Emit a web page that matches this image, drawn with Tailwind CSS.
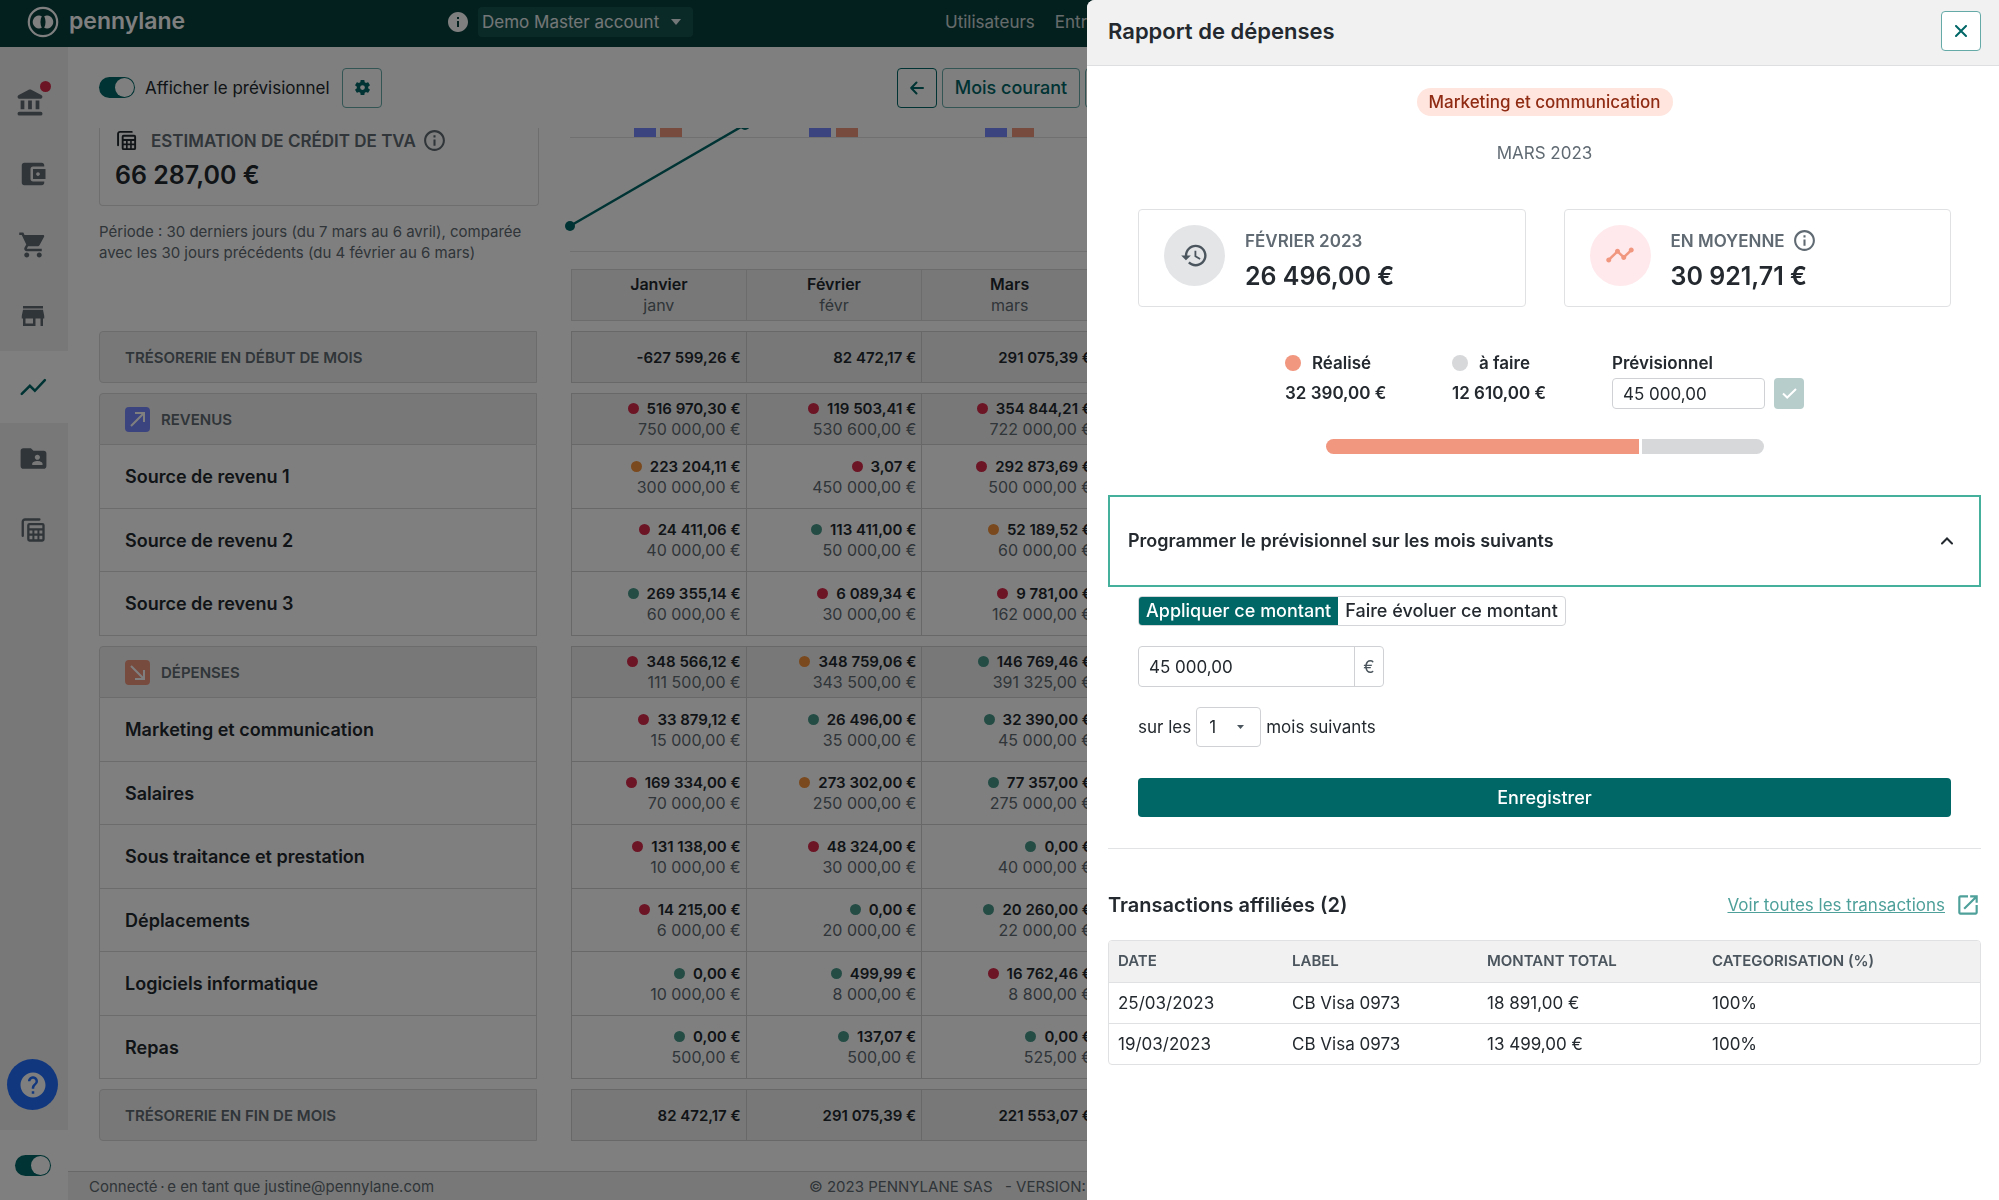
<!DOCTYPE html>
<html lang="fr">
<head>
<meta charset="utf-8">
<meta name="viewport" content="width=device-width, initial-scale=1">
<title>Pennylane – Rapport de dépenses</title>
<script src="https://cdn.jsdelivr.net/npm/@tailwindcss/browser@4"></script>
</head>
<body class="h-screen overflow-hidden bg-white font-['Inter',sans-serif] text-[17px] leading-6 text-[#23292e]">

<svg class="hidden">
  <symbol id="i-bank" viewBox="0 0 24 24"><path d="M10.6 1.6 3 5.6c-1.6.9-1 3 .6 3h16.8c1.6 0 2.2-2.1.6-3l-7.600-4c-.9-.5-1.900-.5-2.800 0zM4.500 10h3v7h-3zM10.500 10h3v7h-3zM16.500 10h3v7h-3zM3.500 19h17a1.500 1.500 0 0 1 0 3h-17a1.500 1.500 0 0 1 0-3z"/></symbol>
  <symbol id="i-wallet" viewBox="0 0 24 24"><path d="M21 18v1c0 1.1-.9 2-2 2H5c-1.110 0-2-.9-2-2V5c0-1.100.89-2 2-2h14c1.100 0 2 .9 2 2v1h-9c-1.110 0-2 .9-2 2v8c0 1.100.89 2 2 2h9zm-9-2h10V8H12v8zm4-2.500c-.83 0-1.500-.67-1.500-1.500s.67-1.500 1.500-1.500 1.500.67 1.500 1.500-.67 1.500-1.500 1.500z"/></symbol>
  <symbol id="i-cart" viewBox="0 0 24 24"><path d="M7 18c-1.100 0-1.990.9-1.990 2S5.900 22 7 22s2-.9 2-2-.9-2-2-2zM1 2v2h2l3.600 7.590-1.350 2.450c-.16.28-.25.61-.25.96 0 1.100.9 2 2 2h12v-2H7.420c-.14 0-.25-.11-.25-.25l.03-.12.9-1.630h7.450c.75 0 1.410-.41 1.750-1.030l3.580-6.490c.08-.14.12-.31.12-.48 0-.55-.45-1-1-1H5.210l-.94-2H1zm16 16c-1.100 0-1.990.9-1.990 2s.89 2 1.990 2 2-.9 2-2-.9-2-2-2z"/></symbol>
  <symbol id="i-store" viewBox="0 0 24 24"><path d="M20 4H4v2h16V4zm1 10v-2l-1-5H4l-1 5v2h1v6h10v-6h4v6h2v-6h1zm-9 4H6v-4h6v4z"/></symbol>
  <symbol id="i-chart" viewBox="0 0 24 24"><path d="M3 17.500 9.500 11l4 4L21.500 6.500" fill="none" stroke="currentColor" stroke-width="2" stroke-linecap="round"/></symbol>
  <symbol id="i-folder" viewBox="0 0 24 24"><path d="M20 6h-8l-2-2H4c-1.100 0-1.990.9-1.990 2L2 18c0 1.100.9 2 2 2h16c1.100 0 2-.9 2-2V8c0-1.100-.9-2-2-2zm-5 3c1.100 0 2 .9 2 2s-.9 2-2 2-2-.9-2-2 .9-2 2-2zm4 8h-8v-1c0-1.330 2.670-2 4-2s4 .67 4 2v1z"/></symbol>
  <symbol id="i-calc" viewBox="0 0 24 24"><path d="M3.200 17V5a2 2 0 0 1 2-2H17.500" fill="none" stroke="currentColor" stroke-width="2" stroke-linecap="round"/><path fill-rule="evenodd" d="M9 6h11a2 2 0 0 1 2 2v12a2 2 0 0 1-2 2H9a2 2 0 0 1-2-2V8a2 2 0 0 1 2-2zm0 2v2.500h11V8zM9 12.500V15h2.500v-2.500zM13.200 12.500V15h2.600v-2.500zM17.500 12.500V15H20v-2.500zM9 17v3h2.500v-3zM13.200 17v3h2.600v-3zM17.500 17v3H20v-3z"/></symbol>
  <symbol id="i-gear" viewBox="0 0 24 24"><path d="M19.140 12.940c.04-.3.06-.61.06-.94 0-.32-.02-.64-.07-.94l2.030-1.580c.18-.14.23-.41.12-.61l-1.920-3.320c-.12-.22-.37-.29-.59-.22l-2.390.96c-.5-.38-1.030-.7-1.620-.94l-.36-2.540c-.04-.24-.24-.41-.48-.41h-3.840c-.24 0-.43.17-.47.41l-.36 2.540c-.59.24-1.130.57-1.620.94l-2.390-.96c-.22-.08-.47 0-.59.22L2.740 8.870c-.12.21-.08.47.12.61l2.030 1.580c-.05.3-.09.63-.09.94s.02.64.07.94l-2.030 1.580c-.18.14-.23.41-.12.61l1.920 3.320c.12.22.37.29.59.22l2.390-.96c.5.38 1.030.7 1.620.94l.36 2.540c.05.24.24.41.48.41h3.840c.24 0 .44-.17.47-.41l.36-2.540c.59-.24 1.130-.56 1.620-.94l2.390.96c.22.08.47 0 .59-.22l1.920-3.320c.12-.22.07-.47-.12-.61l-2.010-1.580zM12 15a3 3 0 1 1 0-6 3 3 0 0 1 0 6z"/></symbol>
  <symbol id="i-info" viewBox="0 0 24 24"><path d="M11 7h2v2h-2zm0 4h2v6h-2zm1-9C6.480 2 2 6.480 2 12s4.480 10 10 10 10-4.480 10-10S17.520 2 12 2zm0 18c-4.410 0-8-3.590-8-8s3.590-8 8-8 8 3.590 8 8-3.590 8-8 8z"/></symbol>
  <symbol id="i-info-solid" viewBox="0 0 24 24"><path d="M12 2C6.480 2 2 6.480 2 12s4.480 10 10 10 10-4.480 10-10S17.520 2 12 2zm1 15h-2v-6h2v6zm0-8h-2V7h2v2z"/></symbol>
  <symbol id="i-help" viewBox="0 0 24 24"><path d="M12 2C6.480 2 2 6.480 2 12s4.480 10 10 10 10-4.480 10-10S17.520 2 12 2zm1 17h-2v-2h2v2zm2.070-7.750l-.9.92C13.450 12.900 13 13.500 13 15h-2v-.5c0-1.100.45-2.100 1.170-2.830l1.240-1.260c.37-.36.59-.86.59-1.410 0-1.100-.9-2-2-2s-2 .9-2 2H8c0-2.210 1.790-4 4-4s4 1.790 4 4c0 .88-.36 1.680-.93 2.250z"/></symbol>
  <symbol id="i-history" viewBox="0 0 24 24"><path d="M13 3c-4.970 0-9 4.030-9 9H1l3.890 3.890.07.14L9 12H6c0-3.870 3.130-7 7-7s7 3.130 7 7-3.130 7-7 7c-1.930 0-3.680-.79-4.940-2.060l-1.420 1.420C8.270 19.990 10.510 21 13 21c4.970 0 9-4.030 9-9s-4.030-9-9-9zm-1 5v5l4.280 2.540.72-1.210-3.500-2.080V8H12z"/></symbol>
  <symbol id="i-timeline" viewBox="0 0 24 24"><path d="M23 8c0 1.100-.9 2-2 2-.18 0-.35-.02-.51-.07l-3.560 3.550c.05.16.07.34.07.52 0 1.100-.9 2-2 2s-2-.9-2-2c0-.18.02-.36.07-.52l-2.550-2.550c-.16.05-.34.07-.52.07s-.36-.02-.52-.07l-4.550 4.560c.05.16.07.33.07.51 0 1.100-.9 2-2 2s-2-.9-2-2 .9-2 2-2c.18 0 .35.02.51.07l4.560-4.550C8.020 9.360 8 9.180 8 9c0-1.100.9-2 2-2s2 .9 2 2c0 .18-.02.36-.07.52l2.550 2.550c.16-.05.34-.07.52-.07s.36.02.52.07l3.550-3.560C19.020 8.350 19 8.180 19 8c0-1.100.9-2 2-2s2 .9 2 2z"/></symbol>
  <symbol id="i-open" viewBox="0 0 24 24"><path d="M19 19H5V5h7V3H5c-1.110 0-2 .9-2 2v14c0 1.100.89 2 2 2h14c1.100 0 2-.9 2-2v-7h-2v7zM14 3v2h3.590l-9.830 9.830 1.410 1.410L19 6.410V10h2V3h-7z"/></symbol>
</svg>

<div class="flex h-full flex-col">
  <header class="flex h-[47px] shrink-0 items-center bg-[#063e3c] pb-1 text-white">
    <a href="#" class="flex w-[446px] items-center gap-[10px] pl-[27px]">
      <svg class="size-8" viewBox="0 0 32 32" fill="none"><circle cx="16" cy="16" r="14.200" stroke="currentColor" stroke-width="2.200"/><path d="M14.800 10.200a6.400 6.400 0 1 0 0 11.600c-1.800-3.500-1.800-8.100 0-11.600zM17.200 10.200a6.400 6.400 0 1 1 0 11.600c1.800-3.500 1.800-8.100 0-11.600z" fill="currentColor"/></svg>
      <span class="pb-[2px] text-[23px] font-semibold">pennylane</span>
    </a>
    <svg class="size-6 shrink-0" fill="currentColor"><use href="#i-info-solid"/></svg>
    <button class="ml-2 flex h-[30px] w-[215px] shrink-0 items-center justify-between rounded bg-[#155450] pr-3 pl-1 text-white/90">
      Demo Master account
      <svg class="h-[6px] w-[10px]" viewBox="0 0 10 6" fill="currentColor"><path d="M0 0h10L5 6z"/></svg>
    </button>
    <nav class="ml-[252px] flex gap-5 text-white/80">
      <a href="#">Utilisateurs</a>
      <a href="#">Entreprises</a>
    </nav>
  </header>

  <div class="flex min-h-0 flex-1">
    <aside class="flex w-[68px] shrink-0 flex-col text-[#606a72]">
      <nav class="flex flex-1 flex-col bg-[#f1f1f1] pt-5">
        <a href="#" aria-label="Banque" class="relative flex h-[71px] items-center justify-center pr-2">
          <svg class="size-[30px]" fill="currentColor"><use href="#i-bank"/></svg>
          <span class="absolute top-[14px] right-[17px] size-[11px] rounded-full bg-[#d92b4b]"></span>
        </a>
        <a href="#" aria-label="Portefeuille" class="flex h-[71px] items-center justify-center pr-[2px]"><svg class="size-[30px]" fill="currentColor"><use href="#i-wallet"/></svg></a>
        <a href="#" aria-label="Achats" class="flex h-[71px] items-center justify-center pr-[2px]"><svg class="size-[30px]" fill="currentColor"><use href="#i-cart"/></svg></a>
        <a href="#" aria-label="Ventes" class="flex h-[71px] items-center justify-center pr-[2px]"><svg class="size-[30px]" fill="currentColor"><use href="#i-store"/></svg></a>
        <a href="#" aria-label="Pilotage" class="flex h-[72px] items-center justify-center bg-white pr-[2px] text-[#006666]"><svg class="size-[30px]" fill="currentColor"><use href="#i-chart"/></svg></a>
        <a href="#" aria-label="Dossier partagé" class="flex h-[71px] items-center justify-center pr-[2px]"><svg class="size-[31px]" fill="currentColor"><use href="#i-folder"/></svg></a>
        <a href="#" aria-label="Comptabilité" class="flex h-[71px] items-center justify-center pr-[2px]"><svg class="size-7" fill="currentColor"><use href="#i-calc"/></svg></a>
        <button aria-label="Aide" class="mt-auto mb-5 ml-[7px] flex size-[51px] items-center justify-center rounded-full bg-[#2270ff] text-white"><svg class="size-[30px]" fill="currentColor"><use href="#i-help"/></svg></button>
      </nav>
      <div class="flex h-[70px] items-center justify-center bg-white pr-[2px]">
        <input type="checkbox" checked aria-label="Mode comptable" class="flex h-[21px] w-9 appearance-none justify-end rounded-full bg-[#006666] p-px before:block before:size-[19px] before:rounded-full before:bg-white before:content-['']">
      </div>
    </aside>

    <div class="flex min-w-0 flex-1 flex-col">
      <div class="flex h-[81px] shrink-0 items-center pl-[31px]">
        <label class="flex w-[243px] items-center gap-[10px] whitespace-nowrap">
          <input type="checkbox" checked class="flex h-[21px] w-9 shrink-0 appearance-none justify-end rounded-full bg-[#006666] p-px before:block before:size-[19px] before:rounded-full before:bg-white before:content-['']">
          <span>Afficher le prévisionnel</span>
        </label>
        <button aria-label="Réglages" class="flex size-10 items-center justify-center rounded border border-[#66aaa8] text-[#006666]"><svg class="size-[19px]" fill="currentColor"><use href="#i-gear"/></svg></button>
        <div class="ml-[515px] flex gap-[5px] text-[18px] font-medium text-[#006666]">
          <button aria-label="Mois précédent" class="flex size-10 items-center justify-center rounded border border-[#006666]"><svg class="size-[14px]" viewBox="0 0 14 14" fill="none" stroke="currentColor" stroke-width="2" stroke-linecap="round" stroke-linejoin="round"><path d="M13 7H1.500M6.500 1.500 1.200 7l5.300 5.500"/></svg></button>
          <button class="h-10 w-[138px] rounded border border-[#66aaa8] whitespace-nowrap">Mois courant</button>
          <button aria-label="Mois suivant" class="size-10 rounded border border-[#66aaa8]"></button>
        </div>
      </div>

      <main class="min-h-0 flex-1 overflow-hidden pl-[31px]">
        <div class="flex h-[141px]">
          <section class="w-[440px] shrink-0">
            <div class="h-[78px] rounded-b border-x border-b border-[#dcdcdc] pl-[15px]">
              <h2 class="flex items-center font-semibold text-[#606a72]">
                <svg class="mr-[13px] size-[23px] text-[#23292e]" fill="currentColor"><use href="#i-calc"/></svg>
                <span class="whitespace-nowrap">ESTIMATION DE CRÉDIT DE TVA</span>
                <svg class="ml-[6px] size-[25px]" fill="currentColor"><use href="#i-info"/></svg>
              </h2>
              <p class="mt-[6px] text-[25px] leading-8 font-semibold">66 287,00 €</p>
            </div>
            <p class="mt-[15px] text-[15px] leading-[21px] text-[#606a72]">Période : 30 derniers jours (du 7 mars au 6 avril), comparée<br>avec les 30 jours précédents (du 4 février au 6 mars)</p>
          </section>
          <svg class="ml-[26px] h-[126px] w-[540px]" viewBox="0 0 540 126" fill="none">
            <path d="M5 9.500H540M5 123.500H540" stroke="#e0e0e0"/>
            <path d="M69 0h22v9H69zM244 0h22v9h-22zM420 0h22v9h-22z" fill="#7888ff"/>
            <path d="M95 0h22v9H95zM271 0h22v9h-22zM447 0h22v9h-22z" fill="#f1967f"/>
            <path d="M5 98 176-1" stroke="#006666" stroke-width="2.500"/>
            <circle cx="5" cy="98" r="5" fill="#006666"/><circle cx="180" cy="-3" r="5" fill="#006666"/>
          </svg>
        </div>

        <table class="w-[999px] table-fixed border-separate border-spacing-0 text-[16px] leading-[21px]">
          <colgroup><col class="w-[438px]"><col class="w-[34px]"><col><col><col></colgroup>
          <thead>
            <tr class="h-[52px]">
              <td></td><td></td>
              <th class="border border-[#d8d8d8] bg-[#f1f1f1] p-0"><span class="block font-semibold">Janvier</span><span class="block font-normal text-[#606a72]">janv</span></th>
              <th class="border-y border-r border-[#d8d8d8] bg-[#f1f1f1] p-0"><span class="block font-semibold">Février</span><span class="block font-normal text-[#606a72]">févr</span></th>
              <th class="border-y border-r border-[#d8d8d8] bg-[#f1f1f1] p-0"><span class="block font-semibold">Mars</span><span class="block font-normal text-[#606a72]">mars</span></th>
            </tr>
          </thead>
        </table>
      </main>

      <footer class="flex h-[29px] shrink-0 items-center border-t border-[#d0d0d0] bg-[#f1f1f1] pl-[21px] text-[15px] whitespace-nowrap text-[#606a72]">
        <span class="w-[720px] pt-px">Connecté&#8201;·&#8201;e en tant que justine@pennylane.com</span>
        <span class="w-[196px] pt-px">© 2023 PENNYLANE SAS</span>
        <span class="pt-px">- VERSION: 1.0</span>
      </footer>
    </div>
  </div>
</div>

<div class="fixed inset-0 bg-black/50"></div>

<div role="dialog" aria-label="Rapport de dépenses" class="fixed inset-y-0 right-0 flex w-[912px] max-w-full flex-col overflow-y-auto rounded-tl-lg bg-white">
  <header class="flex h-[66px] shrink-0 items-center justify-between border-b border-[#dedfe0] bg-[#f1f1f1] pr-[18px] pb-1 pl-[21px]">
    <h1 class="text-[22px] font-semibold">Rapport de dépenses</h1>
    <button aria-label="Fermer" class="flex size-10 items-center justify-center rounded border border-[#66aaa8] bg-white text-[#006666]"><svg class="size-3" viewBox="0 0 12 12" stroke="currentColor" stroke-width="2" stroke-linecap="round"><path d="M1 1l10 10M11 1 1 11"/></svg></button>
  </header>

  <div class="flex flex-col pr-[18px] pl-[21px]">
    <span class="mt-[22px] self-center rounded-full bg-[#ffe5de] px-3 py-[2px] font-medium text-[#8f2b13]">Marketing et communication</span>
    <p class="mt-[25px] text-center text-[#606a72]">MARS 2023</p>

    <div class="mt-11 grid grid-cols-2 gap-[38px] px-[30px]">
      <section class="flex h-[98px] items-center gap-[20px] rounded border border-[#e0e1e3] pl-[25px]">
        <span class="mb-[6px] flex size-[61px] items-center justify-center rounded-full bg-[#e3e5e7] text-[#4b555d]"><svg class="size-[29px]" fill="currentColor"><use href="#i-history"/></svg></span>
        <div class="pt-1">
          <h2 class="font-semibold text-[#606a72]">FÉVRIER 2023</h2>
          <p class="mt-[7px] text-[25px] leading-8 font-semibold">26 496,00 €</p>
        </div>
      </section>
      <section class="flex h-[98px] items-center gap-[20px] rounded border border-[#e0e1e3] pl-[25px]">
        <span class="mb-[6px] flex size-[61px] items-center justify-center rounded-full bg-[#ffe9ec] text-[#f1967f]"><svg class="size-[30px]" fill="currentColor"><use href="#i-timeline"/></svg></span>
        <div class="pt-1">
          <h2 class="flex h-6 items-center gap-[7px] font-semibold text-[#606a72]">EN MOYENNE <svg class="size-[25px]" fill="currentColor"><use href="#i-info"/></svg></h2>
          <p class="mt-[7px] text-[25px] leading-8 font-semibold">30 921,71 €</p>
        </div>
      </section>
    </div>

    <div class="mt-11 flex justify-center font-semibold">
      <div class="w-[167px]">
        <p class="flex items-center gap-[11px]"><span class="size-4 rounded-full bg-[#f1967f]"></span>Réalisé</p>
        <p class="mt-[6px]">32 390,00 €</p>
      </div>
      <div class="w-[160px]">
        <p class="flex items-center gap-[11px]"><span class="size-4 rounded-full bg-[#d7d8da]"></span>à faire</p>
        <p class="mt-[6px]">12 610,00 €</p>
      </div>
      <div>
        <label for="forecast" class="block">Prévisionnel</label>
        <div class="mt-[3px] flex gap-[9px]">
          <input id="forecast" type="text" value="45 000,00" class="h-[31px] w-[153px] rounded border border-[#cfd1d4] px-[10px] font-normal">
          <button aria-label="Valider" class="flex h-[31px] w-[30px] items-center justify-center rounded bg-[#b6cdcb] text-white"><svg class="h-[11px] w-[15px]" viewBox="0 0 15 11" fill="none" stroke="currentColor" stroke-width="2"><path d="M1 5.500 5.200 9.500 14 1"/></svg></button>
        </div>
      </div>
    </div>

    <div class="mt-[30px] flex h-[15px] w-[438px] gap-[3px] self-center overflow-hidden rounded-full">
      <div class="basis-0 bg-[#f1967f]" style="flex-grow:32390"></div>
      <div class="basis-0 bg-[#d7d8da]" style="flex-grow:12610"></div>
    </div>

    <button class="mt-[41px] flex h-[92px] items-center justify-between border-2 border-[#45b09b] pr-[26px] pl-[18px] text-[18px] font-semibold">
      Programmer le prévisionnel sur les mois suivants
      <svg class="h-2 w-3" viewBox="0 0 12 8" fill="none" stroke="currentColor" stroke-width="2" stroke-linecap="round"><path d="M1 6.500 6 1.500l5 5"/></svg>
    </button>

    <form class="mt-[9px] flex flex-col px-[30px]">
      <div class="flex h-[30px] self-start overflow-hidden rounded border border-[#d3d5d8] text-[18px] font-medium whitespace-nowrap">
        <button type="button" class="bg-[#006666] px-[7px] text-white">Appliquer ce montant</button>
        <button type="button" class="px-[7px]">Faire évoluer ce montant</button>
      </div>
      <div class="mt-5 flex h-[41px] w-[246px] rounded border border-[#cfd1d4]">
        <input type="text" value="45 000,00" aria-label="Montant" class="min-w-0 flex-1 rounded-l pl-[10px]">
        <span class="flex w-[29px] items-center justify-center border-l border-[#cfd1d4] text-[#4b555d]">€</span>
      </div>
      <div class="mt-5 flex items-center gap-[5px]">
        <label for="months">sur les</label>
        <div class="relative">
          <select id="months" class="h-10 w-[65px] appearance-none rounded border border-[#cfd1d4] pl-3"><option>1</option><option>2</option><option>3</option></select>
          <svg class="pointer-events-none absolute top-[18px] right-[17px] h-1 w-[7px]" viewBox="0 0 7 4" fill="#4b555d"><path d="M0 0h7L3.500 4z"/></svg>
        </div>
        <span>mois suivants</span>
      </div>
      <button type="button" class="mt-[31px] h-[39px] rounded bg-[#006666] text-[18px] font-medium text-white">Enregistrer</button>
    </form>

    <hr class="mt-[31px] border-[#e2e3e5]">

    <div class="mt-[43px] flex items-center justify-between">
      <h2 class="text-[20px] font-semibold">Transactions affiliées (2)</h2>
      <a href="#" class="flex items-center gap-[10px] text-[#4ea09a]"><span class="underline">Voir toutes les transactions</span><svg class="size-[26px]" fill="currentColor"><use href="#i-open"/></svg></a>
    </div>

    <div class="mt-[22px] overflow-hidden rounded border border-[#e0e1e3]">
      <table class="w-full table-fixed text-left">
        <colgroup><col class="w-[174px]"><col class="w-[195px]"><col class="w-[225px]"><col></colgroup>
        <thead class="bg-[#f1f1f1] text-[15px] text-[#4b555d]">
          <tr class="h-[41px]"><th class="pl-[9px] font-semibold">DATE</th><th class="pl-[9px] font-semibold">LABEL</th><th class="pl-[9px] font-semibold">MONTANT TOTAL</th><th class="pl-[9px] font-semibold">CATEGORISATION (%)</th></tr>
        </thead>
        <tbody>
          <tr class="h-[41px] border-t border-[#e0e1e3]"><td class="pl-[9px]">25/03/2023</td><td class="pl-[9px]">CB Visa 0973</td><td class="pl-[9px]">18 891,00 €</td><td class="pl-[9px]">100%</td></tr>
          <tr class="h-[41px] border-t border-[#e0e1e3]"><td class="pl-[9px]">19/03/2023</td><td class="pl-[9px]">CB Visa 0973</td><td class="pl-[9px]">13 499,00 €</td><td class="pl-[9px]">100%</td></tr>
        </tbody>
      </table>
    </div>
  </div>
</div>

<script>
  // Each amount is [status, actual, forecast]; r = below target, o = close, g = on target.
  const dots = { r: 'bg-[#d92b4b]', o: 'bg-[#f5933c]', g: 'bg-[#48988b]' };
  const sections = [
    { total: true, label: 'TRÉSORERIE EN DÉBUT DE MOIS', values: ['-627 599,26', '82 472,17', '291 075,39'] },
    { label: 'REVENUS', icon: 'up', values: [['r', '516 970,30', '750 000,00'], ['r', '119 503,41', '530 600,00'], ['r', '354 844,21', '722 000,00']], rows: [
      ['Source de revenu 1', ['o', '223 204,11', '300 000,00'], ['r', '3,07', '450 000,00'], ['r', '292 873,69', '500 000,00']],
      ['Source de revenu 2', ['r', '24 411,06', '40 000,00'], ['g', '113 411,00', '50 000,00'], ['o', '52 189,52', '60 000,00']],
      ['Source de revenu 3', ['g', '269 355,14', '60 000,00'], ['r', '6 089,34', '30 000,00'], ['r', '9 781,00', '162 000,00']]] },
    { label: 'DÉPENSES', icon: 'down', values: [['r', '348 566,12', '111 500,00'], ['o', '348 759,06', '343 500,00'], ['g', '146 769,46', '391 325,00']], rows: [
      ['Marketing et communication', ['r', '33 879,12', '15 000,00'], ['g', '26 496,00', '35 000,00'], ['g', '32 390,00', '45 000,00']],
      ['Salaires', ['r', '169 334,00', '70 000,00'], ['o', '273 302,00', '250 000,00'], ['g', '77 357,00', '275 000,00']],
      ['Sous traitance et prestation', ['r', '131 138,00', '10 000,00'], ['r', '48 324,00', '30 000,00'], ['g', '0,00', '40 000,00']],
      ['Déplacements', ['r', '14 215,00', '6 000,00'], ['g', '0,00', '20 000,00'], ['g', '20 260,00', '22 000,00']],
      ['Logiciels informatique', ['g', '0,00', '10 000,00'], ['g', '499,99', '8 000,00'], ['r', '16 762,46', '8 800,00']],
      ['Repas', ['g', '0,00', '500,00'], ['g', '137,07', '500,00'], ['g', '0,00', '525,00']]] },
    { total: true, label: 'TRÉSORERIE EN FIN DE MOIS', values: ['82 472,17', '291 075,39', '221 553,07'] }
  ];
  const arrows = {
    up: '<span class="flex size-[25px] items-center justify-center rounded bg-[#7888ff]"><svg class="size-[15px]" viewBox="0 0 15 15" fill="none" stroke="#fff" stroke-width="2"><path d="M1 14 14 1M5 1h9v9"/></svg></span>',
    down: '<span class="flex size-[25px] items-center justify-center rounded bg-[#f1967f]"><svg class="size-[15px]" viewBox="0 0 15 15" fill="none" stroke="#fff" stroke-width="2"><path d="M1 1 14 14M5 14h9V5"/></svg></span>'
  };
  const amount = ([status, actual, forecast]) =>
    `<span class="flex items-center justify-end gap-2 text-[15px] font-semibold"><span class="size-[11px] rounded-full ${dots[status]}"></span>${actual} €</span><span class="block text-[#606a72]">${forecast} €</span>`;
  const cell = (html, first, shade, top) =>
    `<td class="border-r border-b border-[#d0d1d3] py-0 pr-[5px] pl-0 text-right whitespace-nowrap ${first ? 'border-l' : ''} ${top ? 'border-t' : ''} ${shade ? 'bg-[#f1f1f1]' : ''}">${html}</td>`;
  const spacer = '<tbody><tr class="h-[10px]"><td colspan="5" class="p-0"></td></tr></tbody>';
  const table = document.querySelector('main table');
  table.insertAdjacentHTML('beforeend', sections.map(s => {
    const head = `<tr class="h-[52px]"><th class="rounded-tl border border-[#d8d8d8] bg-[#f1f1f1] py-0 pl-[25px] text-left text-[15px] font-semibold text-[#606a72] ${s.total ? 'rounded-bl' : ''}"><span class="flex items-center gap-[11px]">${s.icon ? arrows[s.icon] : ''}${s.label}</span></th><td></td>${s.values.map((v, i) => cell(s.total ? `<span class="text-[15px] font-semibold">${v} €</span>` : amount(v), i === 0, true, true)).join('')}</tr>`;
    const rows = (s.rows || []).map(([label, ...vals]) => `<tr class="h-16 odd:h-[63px]"><th class="border-x border-b border-[#d8d8d8] py-0 pl-[25px] text-left text-[18px] font-semibold">${label}</th><td></td>${vals.map((v, i) => cell(amount(v), i === 0, false, false)).join('')}</tr>`).join('');
    return `${spacer}<tbody>${head}${rows}</tbody>`;
  }).join(''));
</script>
</body>
</html>
